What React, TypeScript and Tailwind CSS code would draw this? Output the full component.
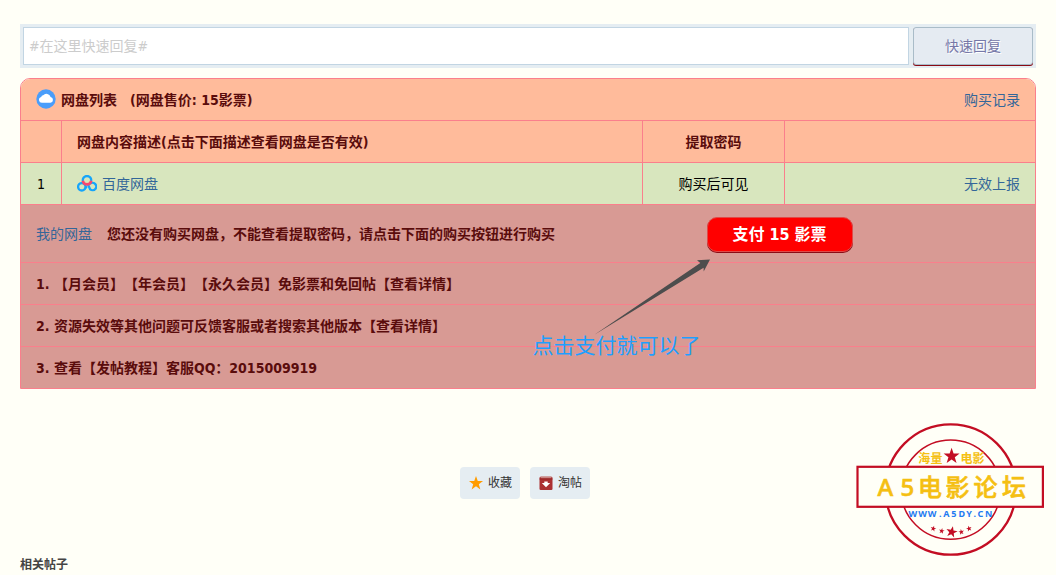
import React, { useState } from "react";

interface DiskItem {
  id: number;
  name: string;
  password: string;
}

const PRICE = 15;

const disks: DiskItem[] = [{ id: 1, name: "百度网盘", password: "购买后可见" }];

const notices = [
  "1. 【月会员】【年会员】【永久会员】免影票和免回帖【查看详情】",
  "2. 资源失效等其他问题可反馈客服或者搜索其他版本【查看详情】",
  "3. 查看【发帖教程】客服QQ：2015009919",
];

// five pointed star, unit radius
const STAR = "0,-1 0.235,-0.324 0.951,-0.309 0.38,0.124 0.588,0.809 0,0.4 -0.588,0.809 -0.38,0.124 -0.951,-0.309 -0.235,-0.324";

function CloudIcon() {
  return (
    <svg className="h-5 w-5 shrink-0" viewBox="0 0 20 20" aria-hidden="true">
      <circle cx="10" cy="10" r="9.7" fill="#4a9dfa" />
      <path
        d="M6.1 13.8a3 3 0 0 1-.9-5.9 2 2 0 0 1 2-1.6 4.3 4.3 0 0 1 7.4 1.6 3 3 0 0 1-.2 5.9z"
        fill="#fff"
      />
    </svg>
  );
}

function BaiduPanIcon() {
  return (
    <svg className="h-[17px] w-5 shrink-0" viewBox="0 0 20 17" fill="none" aria-hidden="true">
      <path d="M5.9 6.1a4.2 4.2 0 1 1 8.2 0" stroke="#16a5fa" strokeWidth="2.3" />
      <circle cx="4.8" cy="11.8" r="3.7" stroke="#16a5fa" strokeWidth="2.3" />
      <path d="M11 9.6l2.2 4.8a3.7 3.7 0 1 0-.3-5.5" stroke="#16a5fa" strokeWidth="2.3" />
      <path d="M7.4 14.4l2.6-3" stroke="#16a5fa" strokeWidth="2" />
      <path d="M5.8 5.8a4.25 4.25 0 0 0 8.4 0" stroke="#f9486e" strokeWidth="2.6" />
    </svg>
  );
}

function StarIcon() {
  return (
    <svg className="h-4 w-4" viewBox="0 0 16 16" aria-hidden="true">
      <polygon points={STAR} transform="translate(8 8.4) scale(7.4)" fill="#ff9c00" />
    </svg>
  );
}

function CollectIcon() {
  return (
    <svg className="h-4 w-4" viewBox="0 0 16 16" aria-hidden="true">
      <rect x="1.5" y="1.8" width="13" height="13.2" rx="1.2" fill="#ac3031" />
      <rect x="2.5" y="1.6" width="11" height="1.6" rx="0.6" fill="#c98784" />
      <rect x="1.5" y="3.6" width="13" height="0.8" fill="#8f2424" />
      <path d="M6.3 6.4h3.4V8h2.5L8 12.2 3.8 8h2.5z" fill="#fff" />
    </svg>
  );
}

function PayHint() {
  return (
    <div className="pointer-events-none absolute right-full top-full -mr-1.5 mt-[7px] w-[180px]">
      <svg className="ml-[61px] h-[77px] w-[116px]" viewBox="0 0 116 77" aria-hidden="true">
        <path d="M0 76L106.3 4 103 1.2 116 0.5 109.7 12.5 109.6 8.8z" fill="#4d4d4d" />
      </svg>
      <p className="-mt-1 whitespace-nowrap text-[21px] font-normal leading-7 text-[#1e9fff]">点击支付就可以了</p>
    </div>
  );
}

function SiteStamp() {
  const smallStars = ["translate(77.3 107.7) rotate(15)", "translate(85.7 110) rotate(10)", "translate(105.3 111) rotate(-10)", "translate(113 107.7) rotate(-15)"];

  return (
    <svg
      className="absolute right-3 top-[2px] h-[136px] w-[188px]"
      viewBox="0 0 188 136"
      fill="none"
      fontFamily='"Noto Sans", "Noto Sans CJK SC", sans-serif'
    >
      <circle cx="94.7" cy="68.5" r="65.2" stroke="#c30d23" strokeWidth="2.3" />
      <circle cx="94.7" cy="68.7" r="49.6" stroke="#c30d23" strokeWidth="1.5" />
      <rect x="1.5" y="45.8" width="185.4" height="40" fill="#fffff7" stroke="#c30d23" strokeWidth="2.2" />
      <polygon points={STAR} transform="translate(95.6 35.2) scale(8.4)" fill="#c30d23" />
      <text y="42" fontSize="12" fontWeight="700" fill="#f5c013" x="62.3 74.6 104.6 116.4">
        海量电影
      </text>
      <text y="74.5" fontSize="24" fontWeight="500" fill="#f5bf12" stroke="#f5bf12" strokeWidth="0.6" x="21.5 44.5 62 89.4 117.4 146">
        A5电影论坛
      </text>
      <text y="96" fontSize="9" fontWeight="700" fill="#1f7bf2" x="52.6 62.2 71.8 83 87.3 95.2 102.4 110.2 117.4 121.6 129">
        WWW.A5DY.CN
      </text>
      {smallStars.map((t) => (
        <polygon key={t} points={STAR} transform={`${t} scale(3)`} fill="#c30d23" />
      ))}
      <polygon points={STAR} transform="translate(95.7 111) rotate(12) scale(6)" fill="#c30d23" />
    </svg>
  );
}

export default function App() {
  const [reply, setReply] = useState("");

  const line = "border-[#fa7f8c]";

  return (
    <div className="min-h-screen bg-[#fffff7] px-5 pt-6 font-['DejaVu_Sans_Condensed','Noto_Sans_CJK_SC',sans-serif] text-sm text-black [text-spacing-trim:space-all]">
      {/* quick reply */}
      <form className="flex gap-1 bg-[#e5edf2] p-[3px]" onSubmit={(e) => e.preventDefault()}>
        <input
          type="text"
          aria-label="快速回复"
          value={reply}
          onChange={(e) => setReply(e.target.value)}
          placeholder="#在这里快速回复#"
          className="h-[38px] min-w-0 flex-1 border border-[#c2d5e3] bg-white px-[5px] outline-none placeholder:text-[#cccccc]"
        />
        <button
          type="submit"
          className="h-[38px] w-[120px] rounded-[3px] border border-[#a9bcc8] bg-[#e5ebf2] text-[#7678a8] shadow-[0_1px_0_#8b0a14] [text-shadow:1px_1px_0_#fff]"
        >
          快速回复
        </button>
      </form>

      {/* disk list */}
      <div className={`mt-2.5 overflow-hidden rounded-t-[10px] border ${line}`}>
        <div className="flex h-[41px] items-center bg-[#ffbb9b] px-[15px] font-bold text-[#5a0c0c]">
          <span className="pb-0.5">
            <CloudIcon />
          </span>
          <h2 className="ml-[5px]">网盘列表</h2>
          <span className="ml-[13px]">(网盘售价: {PRICE}影票)</span>
          <a href="#log" className="ml-auto font-normal text-[#336699]">
            购买记录
          </a>
        </div>

        <table className="w-full table-fixed border-separate border-spacing-0">
          <colgroup>
            <col className="w-10" />
            <col />
            <col className="w-[14%]" />
            <col className="w-[251px]" />
          </colgroup>
          <thead>
            <tr className="h-[42px] bg-[#ffbb9b] text-[#5a0c0c]">
              <th className={`border-t ${line}`}></th>
              <th className={`border-l border-t px-[15px] text-left ${line}`}>
                网盘内容描述(点击下面描述查看网盘是否有效)
              </th>
              <th className={`border-l border-t ${line}`}>提取密码</th>
              <th className={`border-l border-t ${line}`}></th>
            </tr>
          </thead>
          <tbody>
            {disks.map((disk) => (
              <tr key={disk.id} className="h-[42px] bg-[#d8e6be]">
                <td className={`border-t text-center ${line}`}>{disk.id}</td>
                <td className={`border-l border-t px-[15px] ${line}`}>
                  <a href="#disk" className="flex items-center gap-[5px] text-[#336699]">
                    <BaiduPanIcon />
                    {disk.name}
                  </a>
                </td>
                <td className={`border-l border-t text-center ${line}`}>{disk.password}</td>
                <td className={`border-l border-t px-[15px] text-right ${line}`}>
                  <a href="#report" className="text-[#336699]">
                    无效上报
                  </a>
                </td>
              </tr>
            ))}
          </tbody>
        </table>

        <div className="bg-[#d89a94] font-bold text-[#5a0c0c]">
          <div className={`grid h-[58px] grid-cols-2 items-center border-t ${line}`}>
            <p className="whitespace-nowrap pl-[15px]">
              <a href="#mine" className="mr-[15px] font-normal text-[#336699]">
                我的网盘
              </a>
              您还没有购买网盘，不能查看提取密码，请点击下面的购买按钮进行购买
            </p>
            <div className="flex justify-center pr-1 pt-0.5">
              <div className="relative">
                <button
                  type="button"
                  className="block h-[35px] w-[146px] rounded-[10px] border border-[#e04a48] bg-[#ff0000] text-base font-bold text-white shadow-[0_1px_0_#8b0a14]"
                >
                  支付 {PRICE} 影票
                </button>
                <PayHint />
              </div>
            </div>
          </div>
          {notices.map((text) => (
            <p key={text} className={`flex h-[42px] items-center border-t px-[15px] ${line}`}>
              {text}
            </p>
          ))}
        </div>
      </div>

      {/* post actions */}
      <div className="relative -mx-5 mt-[30px] flex justify-center gap-2.5 pb-[58px] pr-1.5 pt-12 text-xs text-[#333333]">
        <button type="button" className="flex h-8 w-[60px] items-center justify-center gap-1 rounded bg-[#e5edf2]">
          <StarIcon />
          收藏
        </button>
        <button type="button" className="flex h-8 w-[60px] items-center justify-center gap-1 rounded bg-[#e5edf2]">
          <CollectIcon />
          淘帖
        </button>
        <SiteStamp />
      </div>

      <h3 className="text-xs font-bold text-[#444444]">相关帖子</h3>
    </div>
  );
}
